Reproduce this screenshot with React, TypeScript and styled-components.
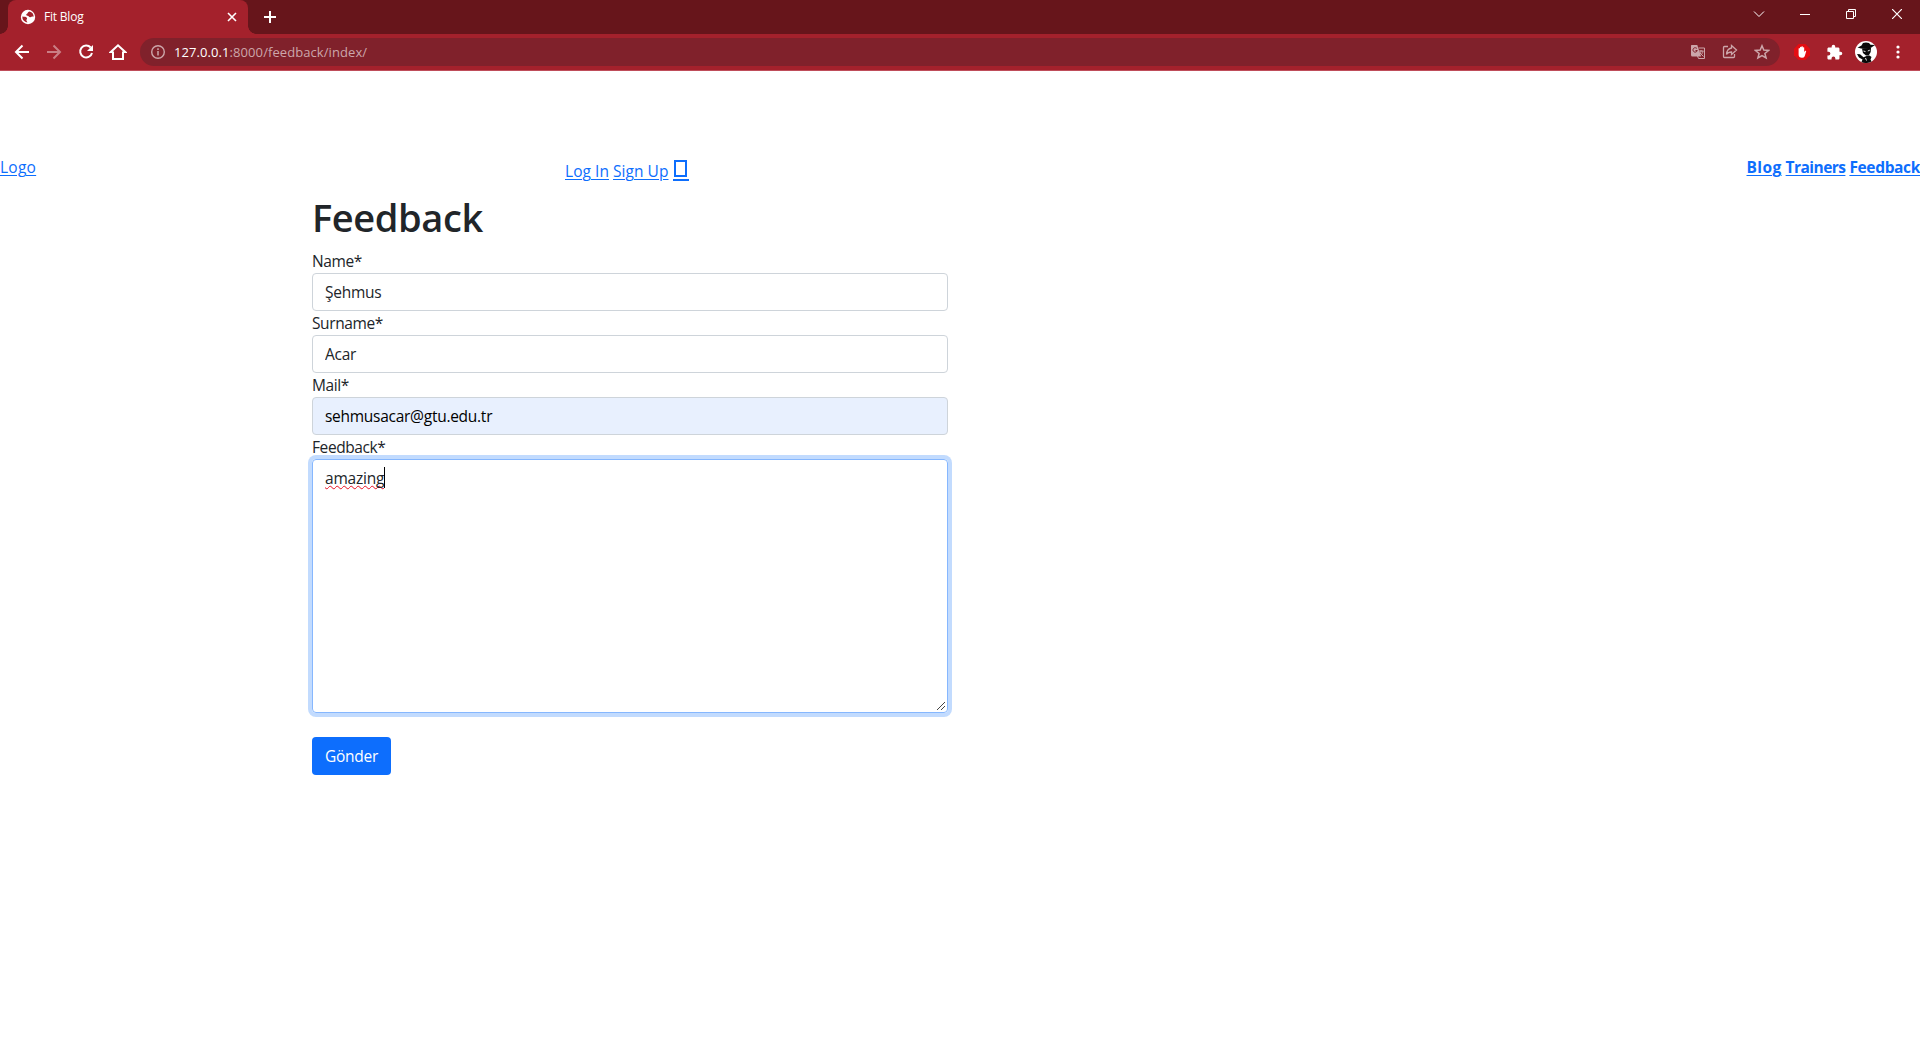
import React from "react";
import styled, { createGlobalStyle } from "styled-components";

const Global = createGlobalStyle`
  * { box-sizing: border-box; }
  body { margin: 0; background: #fff; color: #212529; font: 15.5px/24px "Open Sans", "Noto Sans", sans-serif; overflow: hidden; }
`;

const TabStrip = styled.div`
  height: 34px;
  background: #67151b;
  display: flex;
  align-items: stretch;
  padding-left: 8px;
`;
const Tab = styled.div`
  width: 240px;
  background: #a4212c;
  border-radius: 8px 8px 0 0;
  display: flex;
  align-items: center;
  padding: 0 10px 0 12px;
  color: #fff;
  font-size: 12px;
  letter-spacing: -0.2px;
  position: relative;
  &::before, &::after {
    content: "";
    position: absolute;
    bottom: 0;
    width: 8px;
    height: 8px;
  }
  &::before { left: -8px; background: radial-gradient(circle at 0 0, transparent 7.5px, #a4212c 8px); }
  &::after { right: -8px; background: radial-gradient(circle at 100% 0, transparent 7.5px, #a4212c 8px); }
`;
const TabTitle = styled.span`
  flex: 1;
  margin-left: 8px;
`;
const NewTab = styled.div`
  width: 44px;
  display: flex;
  align-items: center;
  justify-content: center;
`;
const WindowButtons = styled.div`
  margin-left: auto;
  display: flex;
  height: 28px;
`;
const WindowButton = styled.div`
  width: 46px;
  display: flex;
  align-items: center;
  justify-content: center;
`;
const Toolbar = styled.div`
  height: 37px;
  background: #a4212c;
  border-bottom: 1px solid #bf4d5a;
  display: flex;
  align-items: center;
  padding: 0 5px 0 6px;
`;
const ToolButton = styled.div`
  width: 32px;
  height: 28px;
  display: flex;
  align-items: center;
  justify-content: center;
`;
const Omnibox = styled.div`
  height: 28px;
  width: 1640px;
  margin-left: 6px;
  margin-right: 6px;
  border-radius: 14px;
  background: #80212b;
  color: #cca6aa;
  display: flex;
  align-items: center;
  padding: 0 2px 0 10px;
  font-size: 13px;
`;
const Url = styled.span`
  flex: 1;
  margin-left: 8px;
  letter-spacing: 0.08px;
`;
const Host = styled.span`
  color: #fff;
`;

const Header = styled.header`
  height: 122px;
  padding-top: 84px;
  display: grid;
  grid-template-columns: 565px 1fr auto;
  align-items: start;
`;
const Group = styled.nav<{ $drop?: number }>`
  display: flex;
  gap: 4px;
  margin-top: ${(p) => p.$drop ?? 0}px;
`;
const Link = styled.a<{ $bold?: boolean; $track?: number }>`
  color: #0d6efd;
  text-decoration: underline;
  text-decoration-thickness: 1px;
  text-underline-offset: 2px;
  font-weight: ${(p) => (p.$bold ? 700 : 400)};
  letter-spacing: ${(p) => p.$track ?? 0.05}px;
`;
const IconLink = styled.a`
  width: 16px;
  height: 21px;
  margin-top: 1px;
  border-bottom: 2px solid #0d6efd;
  display: flex;
  justify-content: center;
  align-items: flex-start;
`;
const MissingGlyph = styled.span`
  width: 13px;
  height: 17px;
  border: 2px solid #0d6efd;
`;

const Container = styled.main`
  width: 1320px;
  margin: 0 auto;
  padding: 0 12px;
`;
const Form = styled.form`
  width: 636px;
  display: flex;
  flex-direction: column;
`;
const Title = styled.h1`
  margin: 0 0 8px;
  font-size: 38px;
  line-height: 48px;
  font-weight: 600;
  letter-spacing: -0.4px;
`;
const Label = styled.label`
  height: 24px;
  letter-spacing: -0.4px;
`;
const Input = styled.input<{ $filled?: boolean }>`
  height: 38px;
  border: 1px solid #ced4da;
  border-radius: 4px;
  padding: 6px 12px;
  font: inherit;
  letter-spacing: -0.27px;
  color: ${(p) => (p.$filled ? "#000" : "#212529")};
  background: ${(p) => (p.$filled ? "#e8f0fe" : "#fff")};
  outline: 0;
`;
const Area = styled.div`
  height: 254px;
  border: 1px solid #86b7fe;
  border-radius: 4px;
  box-shadow: 0 0 0 4px rgba(13, 110, 253, 0.25);
  padding: 6px 12px;
  display: flex;
  align-items: flex-start;
  position: relative;
`;
const Misspelled = styled.span`
  letter-spacing: -0.22px;
  text-decoration: underline wavy #e81123 1px;
  text-decoration-skip-ink: none;
  text-underline-offset: 1px;
`;
const Caret = styled.span`
  width: 1px;
  height: 21px;
  margin-top: 1px;
  background: #000;
`;
const Grip = styled.svg`
  position: absolute;
  right: 1px;
  bottom: 1px;
`;
const Submit = styled.button`
  align-self: flex-start;
  width: 79px;
  height: 38px;
  margin-top: 24px;
  padding: 0;
  border: 0;
  border-radius: 4px;
  background: #0d6efd;
  color: #fff;
  font: inherit;
  letter-spacing: -0.25px;
`;

const line = { fill: "none", stroke: "#fff", strokeWidth: 2 } as const;

export default function App() {
  return (
    <>
      <Global />
      <TabStrip>
        <Tab>
          <svg width="16" height="16" viewBox="0 0 16 16">
            <circle cx="8" cy="8" r="7.2" fill="#fff" />
            <path d="M9.500 2.400C7.500 2.500 8 4.600 6.700 5c-1 .3-.5 1.800.8 1.800 1.500 0 1.300 1.700 2.800 1.500 1.200-.2 1.800-1 3.400-.6a5.600 5.600 0 0 0-4.200-5.300z" fill="#a4212c" />
            <path d="M2.300 7.600c2 .2 4.200.2 4.700 1.500.4 1.100-.8 1.200-.6 2.300.2 1 1 .9.900 2.200A5.700 5.700 0 0 1 2.300 7.600z" fill="#a4212c" />
          </svg>
          <TabTitle>Fit Blog</TabTitle>
          <svg width="12" height="12" viewBox="0 0 12 12"><path d="M2 2l8 8M10 2l-8 8" {...line} strokeWidth={1.6} /></svg>
        </Tab>
        <NewTab>
          <svg width="14" height="14" viewBox="0 0 14 14"><path d="M7 1v12M1 7h12" {...line} /></svg>
        </NewTab>
        <WindowButtons>
          <WindowButton><svg width="12" height="12" viewBox="0 0 12 12"><path d="M1 3.500l5 5 5-5" {...line} strokeWidth={1} /></svg></WindowButton>
          <WindowButton><svg width="10" height="10" viewBox="0 0 10 10"><path d="M0 5.500h10" {...line} strokeWidth={1} /></svg></WindowButton>
          <WindowButton><svg width="10" height="10" viewBox="0 0 10 10"><path d="M.5 2.500h7v7h-7zM2.500 2.500v-2h7v7h-2" {...line} strokeWidth={1} /></svg></WindowButton>
          <WindowButton><svg width="10" height="10" viewBox="0 0 10 10"><path d="M0 0l10 10M10 0L0 10" {...line} strokeWidth={1.2} /></svg></WindowButton>
        </WindowButtons>
      </TabStrip>
      <Toolbar>
        <ToolButton><svg width="16" height="16" viewBox="0 0 16 16"><path d="M15 8H2.500M8.500 1.500L2 8l6.500 6.500" {...line} /></svg></ToolButton>
        <ToolButton><svg width="16" height="16" viewBox="0 0 16 16" opacity=".42"><path d="M1 8h12.500M7.500 1.500L14 8l-6.500 6.500" {...line} /></svg></ToolButton>
        <ToolButton><svg width="16" height="16" viewBox="0 0 16 16"><path d="M12.700 3.500A6 6 0 1 0 14 9" {...line} /><path d="M15 1v6H9z" fill="#fff" /></svg></ToolButton>
        <ToolButton><svg width="18" height="18" viewBox="0 0 18 18"><path d="M4 8.500V16h10V8.500M4 9H1.800L9 2.300 16.200 9H14" {...line} /></svg></ToolButton>
        <Omnibox>
          <svg width="16" height="16" viewBox="0 0 16 16"><circle cx="8" cy="8" r="6.300" fill="none" stroke="#cca6aa" strokeWidth="1.400" /><path d="M8 7v4.500M8 4.300v1.600" stroke="#cca6aa" strokeWidth="1.500" /></svg>
          <Url><Host>127.0.0.1</Host>:8000/feedback/index/</Url>
          <ToolButton>
            <svg width="16" height="16" viewBox="0 0 16 16">
              <path d="M1.500 1h5.800l3.700 11.500H2.500A1.500 1.500 0 0 1 1 11V1.500z" fill="#cca6aa" />
              <path d="M7 4.700a2.200 2.200 0 1 0 .3 1.800H5.500" fill="none" stroke="#80212b" />
              <path d="M8.500 4H14.500v10.500H8.500L7.500 12M9 7h4.500M11 6v1c0 2-1.500 3.500-2 4M9.500 8.500l4 4M13 7c0 2-2 4-2.500 4.500" fill="none" stroke="#cca6aa" />
            </svg>
          </ToolButton>
          <ToolButton>
            <svg width="16" height="16" viewBox="0 0 16 16" fill="none" stroke="#cca6aa" strokeWidth="1.300">
              <path d="M6 2.500H2.500a1 1 0 0 0-1 1v9a1 1 0 0 0 1 1h9a1 1 0 0 0 1-1V10" />
              <path d="M9.500 1.500L14.500 6l-5 4.500V8C7 8 5.500 8.800 4.500 10.500 4.700 7 6.500 4.500 9.500 4z" />
            </svg>
          </ToolButton>
          <ToolButton>
            <svg width="16" height="16" viewBox="0 0 16 16"><path d="M8 1.800l1.800 4.300 4.700.4-3.600 3 1.200 4.500L8 11.600 3.900 14l1.200-4.500-3.600-3 4.700-.4z" fill="none" stroke="#cca6aa" strokeWidth="1.500" /></svg>
          </ToolButton>
        </Omnibox>
        <ToolButton>
          <svg width="16" height="16" viewBox="0 0 16 16"><path d="M4.700 0h6.600L16 4.700v6.600L11.300 16H4.700L0 11.300V4.700z" fill="#e40d12" /><path d="M4.600 8V4.500q.8-.8 1.400 0V3.200q.8-.8 1.400 0V2.500q.8-.7 1.400 0v.9q.8-.6 1.400.2v4.400l1-1.200q1-.3 1 .5L10.700 12.200q-.8 1.600-2.700 1.600-3.400 0-3.400-3.300z" fill="#fff" /></svg>
        </ToolButton>
        <ToolButton>
          <svg width="17" height="17" viewBox="0 0 24 24" fill="#fff"><path d="M20.500 11H19V7c0-1.100-.9-2-2-2h-4V3.500a2.500 2.500 0 0 0-5 0V5H4c-1.100 0-2 .9-2 2v3.800h1.500a2.700 2.700 0 0 1 0 5.400H2V20c0 1.100.9 2 2 2h3.800v-1.500a2.700 2.700 0 0 1 5.400 0V22H17c1.100 0 2-.9 2-2v-4h1.500a2.500 2.500 0 0 0 0-5z" /></svg>
        </ToolButton>
        <ToolButton>
          <svg width="22" height="22" viewBox="0 0 22 22">
            <circle cx="11" cy="11" r="11" fill="#fff" />
            <path d="M2.500 6.500Q5 5.500 6.500 4.500L8 2q3-1 6 0l1.500 1.800 4.500.2-4 2.800Q9 9 2.500 6.500z" fill="#0a0a0a" />
            <path d="M7 7.500l9-.8-.3 4.300-2 3.500H11L8 12z" fill="#0a0a0a" />
            <path d="M2 13l3 .3 3.500 3 3-1.300 3-.5 2 1.500-1 2.500 1 2A11 11 0 0 1 6.500 21l1-2.500L4 16.500z" fill="#0a0a0a" />
            <path d="M8.500 10l2 .6M12.800 10l2-.8M10.500 17l1 2.500" fill="none" stroke="#fff" strokeWidth=".9" />
          </svg>
        </ToolButton>
        <ToolButton>
          <svg width="4" height="16" viewBox="0 0 4 16" fill="#fff"><circle cx="2" cy="3" r="1.600" /><circle cx="2" cy="8" r="1.600" /><circle cx="2" cy="13" r="1.600" /></svg>
        </ToolButton>
      </Toolbar>

      <Header>
        <Group><Link $track={0.25}>Logo</Link></Group>
        <Group $drop={4}>
          <Link>Log In</Link>
          <Link>Sign Up</Link>
          <IconLink><MissingGlyph /></IconLink>
        </Group>
        <Group>
          <Link $bold $track={0.4}>Blog</Link>
          <Link $bold $track={-0.55}>Trainers</Link>
          <Link $bold $track={-0.35}>Feedback</Link>
        </Group>
      </Header>
      <Container>
        <Form>
          <Title>Feedback</Title>
          <Label>Name*</Label>
          <Input defaultValue="Şehmus" />
          <Label>Surname*</Label>
          <Input defaultValue="Acar" />
          <Label>Mail*</Label>
          <Input $filled defaultValue="sehmusacar@gtu.edu.tr" />
          <Label>Feedback*</Label>
          <Area>
            <Misspelled>amazing</Misspelled>
            <Caret />
            <Grip width="11" height="11" viewBox="0 0 11 11"><path d="M2 10L10 2M6 10l4-4" stroke="#444" fill="none" /></Grip>
          </Area>
          <Submit type="button">Gönder</Submit>
        </Form>
      </Container>
    </>
  );
}
